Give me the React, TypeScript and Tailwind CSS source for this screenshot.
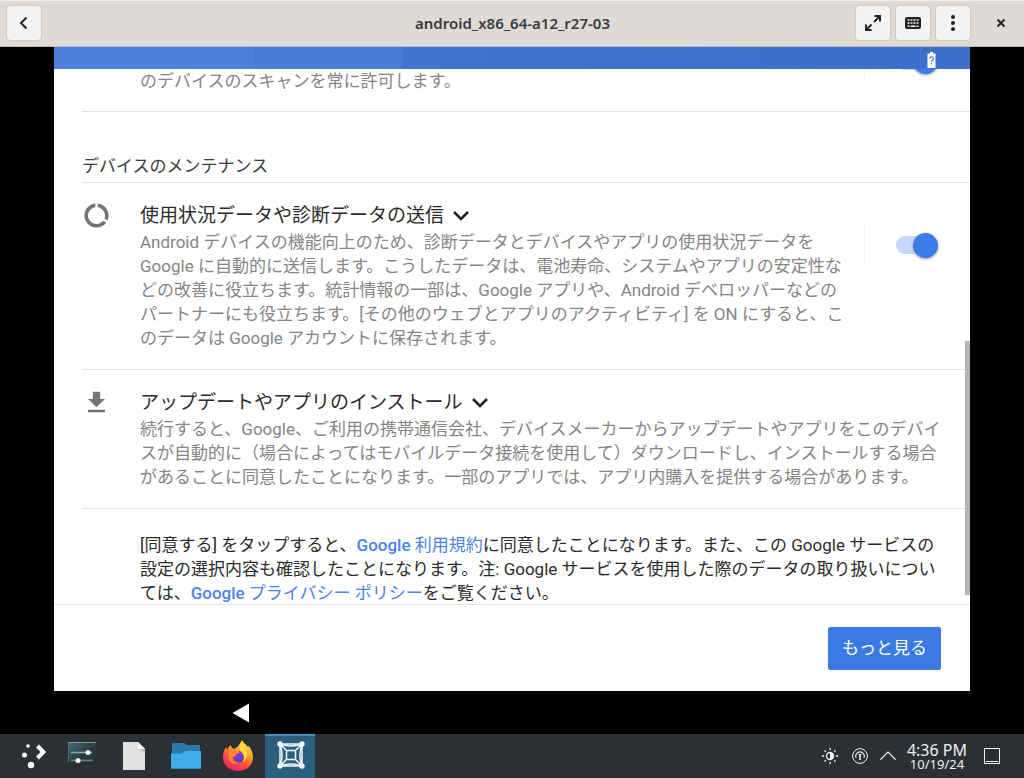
import { ReactNode, useState } from "react";
import clsx from "clsx";

interface toggleInterface {
  label: string;
}

function Toggle({ label }: toggleInterface) {
  const [on, setOn] = useState(true);

  return (
    <div className="flex flex-row items-center h-10 w-[106px] shrink-0 border-l border-gray-100 pl-[31px]">
      <label className="relative flex items-center w-[42px] h-[26px] cursor-pointer">
        <input
          type="checkbox"
          role="switch"
          aria-label={label}
          checked={on}
          onChange={() => setOn(!on)}
          className="peer appearance-none w-9 h-[18px] rounded-full bg-gray-300 checked:bg-[#c5d7fa]"
        />
        <span className="absolute left-0 size-[25px] rounded-full bg-gray-100 shadow-sm shadow-gray-400 peer-checked:left-[17px] peer-checked:bg-[#3b7de8]" />
      </label>
    </div>
  );
}

interface itemInterface {
  icon: string;
  title: string;
  text: string;
  toggle?: boolean;
}

function SettingItem({ icon, title, text, toggle }: itemInterface) {
  return (
    <div className="flex flex-row py-[19px] border-b border-[#e2e2e2]">
      <div className="flex items-center w-[58px] h-[26px] shrink-0">
        <svg viewBox="0 0 24 24" className="size-[29px] fill-[#757575]">
          <path d={icon} />
        </svg>
      </div>
      <div className={clsx("flex-1", toggle ? "pr-4" : "pr-7")}>
        <h3>
          <button className="flex flex-row items-center gap-2 text-[19px] leading-7 text-[#2b2b2b]">
            {title}
            <svg viewBox="0 0 18 12" className="w-[18px] h-3">
              <path
                d="M2 2l7 7 7-7"
                fill="none"
                stroke="#222"
                strokeWidth="2.6"
              />
            </svg>
          </button>
        </h3>
        <p className="text-[17px] leading-6 text-[#858585]">{text}</p>
      </div>
      {toggle && (
        <div className="pt-[23px]">
          <Toggle label={title} />
        </div>
      )}
    </div>
  );
}

interface headerButtonInterface {
  label: string;
  children: ReactNode;
}

function HeaderButton({ label, children }: headerButtonInterface) {
  return (
    <button
      aria-label={label}
      className="flex justify-center items-center size-[34px] rounded-sm bg-[#f5f3f1] shadow-[0_0_1px_1px_#d0cac4]"
    >
      {children}
    </button>
  );
}

function WindowHeader() {
  return (
    <header className="grid grid-cols-[1fr_auto_1fr] items-center h-[47px] shrink-0 pl-[7px] pr-1.5 pb-px bg-[#dfdad6] border-b border-b-[#bfb8b1] shadow-[inset_0_1px_#f0edea]">
      <HeaderButton label="Back">
        <svg viewBox="0 0 16 16" className="size-4">
          <path
            d="M10.5 2.5L5 8l5.500 5.500"
            fill="none"
            stroke="#222"
            strokeWidth="2"
          />
        </svg>
      </HeaderButton>
      <h1 className="text-[15px] leading-5 font-semibold text-[#383c3e] font-['Noto_Sans',sans-serif]">
        android_x86_64-a12_r27-03
      </h1>
      <div className="flex flex-row justify-end items-center gap-1.5">
        <HeaderButton label="Fullscreen">
          <svg viewBox="0 0 18 18" className="size-[18px]">
            <path
              d="M10.500 2H16v5.500M15.500 2.500L10 8M2 10.500V16h5.500M2.500 15.500L7.500 10.500"
              fill="none"
              stroke="#222"
              strokeWidth="2"
            />
          </svg>
        </HeaderButton>
        <HeaderButton label="Keyboard">
          <svg viewBox="0 0 18 14" className="w-[18px] h-3.5">
            <rect x="1" y="1" width="16" height="12" rx="2" fill="#222" />
            <path
              d="M3.500 4h11M3.500 7h11"
              stroke="#f5f3f1"
              strokeWidth="1.500"
              strokeDasharray="2 1"
            />
            <path
              d="M3.500 10.200h2M6.500 10.200h5M12.500 10.200h2"
              stroke="#f5f3f1"
              strokeWidth="1.500"
            />
          </svg>
        </HeaderButton>
        <HeaderButton label="Menu">
          <svg viewBox="0 0 16 18" className="w-4 h-[18px] fill-[#222]">
            <circle cx="8" cy="3" r="2" />
            <circle cx="8" cy="9" r="2" />
            <circle cx="8" cy="15" r="2" />
          </svg>
        </HeaderButton>
        <button
          aria-label="Close"
          className="flex justify-center items-center size-[34px] ml-2"
        >
          <svg viewBox="0 0 10 10" className="size-2.5">
            <path d="M1.500 1.500l7 7M8.500 1.500l-7 7" stroke="#222" strokeWidth="2" />
          </svg>
        </button>
      </div>
    </header>
  );
}

function DeviceScreen() {
  return (
    <main className="flex flex-col flex-1 min-h-0 mx-[54px] bg-white font-[Roboto,'Noto_Sans_CJK_JP',sans-serif]">
      <div className="relative z-10 flex flex-row justify-end items-center h-[22px] shrink-0 pr-[34px] pt-1 bg-[linear-gradient(90deg,#4a80de_200px,#477cd8_200px,#477cd8_348px,#3f74d0_348px,#3b6fca)]">
        <svg viewBox="0 0 9 16" className="w-[9px] h-4">
          <path d="M3 0h3v1.500h2.500V16H.5V1.500H3z" fill="#fff" />
          <path
            d="M2.800 6.500c0-2.400 3.600-2.200 3.600 0 0 1.500-1.800 1.400-1.800 3.200M4.600 11v1.600"
            fill="none"
            stroke="#3f74d0"
            strokeWidth="1.200"
          />
        </svg>
      </div>
      <div className="relative flex-1 min-h-0 overflow-hidden">
        <div className="-mt-7 pl-7">
          <div className="flex flex-row h-[71px] pb-[18px] border-b border-[#e2e2e2]">
            <p className="flex-1 self-end pl-[58px] text-[17px] leading-6 text-[#858585]">
              のデバイスのスキャンを常に許可します。
            </p>
            <Toggle label="スキャン" />
          </div>
          <h2 className="pt-[42px] pb-1 text-[17px] leading-6 text-[#3c3c3c] border-b border-[#e2e2e2]">
            デバイスのメンテナンス
          </h2>
          {ITEMS.map((item) => (
            <SettingItem key={item.title} {...item} />
          ))}
          <p className="pl-[58px] pr-7 pt-6 text-[17px] leading-6 text-[#2b2b2b]">
            [同意する] をタップすると、
            <a href="#terms" className="text-[#4a83e8]">
              <span className="font-medium">Google</span> 利用規約
            </a>
            に同意したことになります。また、この Google
            サービスの設定の選択内容も確認したことになります。注: Google
            サービスを使用した際のデータの取り扱いについては、
            <a href="#privacy" className="text-[#4a83e8]">
              <span className="font-medium">Google</span> プライバシー ポリシー
            </a>
            をご覧ください。
          </p>
        </div>
        <div className="absolute right-0 bottom-[9px] w-[5px] h-[254px] bg-[#b3b3b3]" />
      </div>
      <footer className="flex flex-row justify-end items-start h-[87px] shrink-0 pt-[22px] pr-[29px] border-t border-[#e2e2e2]">
        <button className="h-[43px] px-3.5 rounded-xs bg-[#3b7ae4] text-[17px] text-white">
          もっと見る
        </button>
      </footer>
    </main>
  );
}

interface taskInterface {
  label: string;
  active?: boolean;
  children: ReactNode;
}

function Task({ label, active, children }: taskInterface) {
  return (
    <button
      aria-label={label}
      className={clsx(
        "flex justify-center items-center w-[50px] h-full",
        active && "bg-[#2b5f7c] border-t-2 border-[#4090bd]"
      )}
    >
      {children}
    </button>
  );
}

function Taskbar() {
  return (
    <nav className="flex flex-row justify-between h-11 shrink-0 pl-[5px] pr-6 bg-[#2a3034] font-['Noto_Sans',sans-serif] text-[#eef0f1]">
      <div className="flex flex-row gap-0.5">
        <Task label="Start">
          <svg viewBox="0 0 32 32" className="size-8 fill-white">
            <circle cx="14" cy="6" r="1.800" />
            <circle cx="10.500" cy="15" r="2.500" />
            <circle cx="17" cy="25" r="3.200" />
            <path
              d="M23.500 6l6 6-6 6"
              fill="none"
              stroke="#fff"
              strokeWidth="4"
            />
          </svg>
        </Task>
        <Task label="Settings">
          <svg viewBox="0 0 32 32" className="size-8">
            <defs>
              <linearGradient id="panel" x1="0" y1="0" x2="1" y2="1">
                <stop offset="0" stopColor="#3f7080" />
                <stop offset="0.600" stopColor="#2b3940" />
                <stop offset="1" stopColor="#2a3034" />
              </linearGradient>
            </defs>
            <path d="M2 2h28v20H2z" fill="url(#panel)" />
            <path d="M2 2.500h28" stroke="#8f8f90" />
            <path d="M2.500 3v19" stroke="#5c6b73" />
            <path d="M5 12.500h21" stroke="#7fb2bd" strokeWidth="1.600" />
            <path d="M5 20.500h22" stroke="#5d7f8a" strokeWidth="1.600" />
            <circle cx="22" cy="12.500" r="2.500" fill="#fff" />
            <circle cx="12" cy="20.500" r="2.500" fill="#fff" />
          </svg>
        </Task>
        <Task label="Document">
          <svg viewBox="0 0 32 32" className="size-8">
            <path d="M5 2h15l7 7v21H5z" fill="#e0e2e2" />
            <path d="M20 2l7 7h-7z" fill="#fafafa" />
            <path d="M20 9h7v3z" fill="#b9bdbe" />
          </svg>
        </Task>
        <Task label="Files">
          <svg viewBox="0 0 32 32" className="size-8">
            <path d="M2 3h12l3 2h13v12H2z" fill="#2c79a8" />
            <path d="M1 13.500h11l3-2.500h16v18H1z" fill="#3daee9" />
            <path d="M1 28h30v1H1z" fill="#2b8cc0" />
          </svg>
        </Task>
        <Task label="Firefox">
          <svg viewBox="0 0 32 32" className="size-8">
            <defs>
              <linearGradient id="flame" x1="0.8" y1="0" x2="0.3" y2="1">
                <stop offset="0" stopColor="#fff44f" />
                <stop offset="0.350" stopColor="#ffa828" />
                <stop offset="0.650" stopColor="#ff5634" />
                <stop offset="1" stopColor="#e81e72" />
              </linearGradient>
              <linearGradient id="globe" x1="0" y1="0" x2="1" y2="1">
                <stop offset="0" stopColor="#b13bd0" />
                <stop offset="1" stopColor="#4a3bc4" />
              </linearGradient>
            </defs>
            <path
              d="M20 0c1 3 4 4 6 7l1-1c2 3 4 7 4 11 0 8-6 14-15 14S1 25 1 17c0-4 1-7 3-10l1 3c1-2 2-4 4-5 0 2 1 3 3 4 3-1 6-5 8-9z"
              fill="url(#flame)"
            />
            <circle cx="16" cy="17" r="6" fill="url(#globe)" />
            <path
              d="M7 11c3-2 6-2 8.500 0 1 0 2 1 2 2-2 0-4 1-4 2 0 2-3 1-3 3 1 4 5 5 7 3-3 4-10 3-11-3z"
              fill="#ff8a2c"
            />
            <path
              d="M20 1c-2 4-3 7-1 10 3 3 4 7 2 11 4-3 5-9 3-13-2-2-4-4-4-8z"
              fill="#ffdc3d"
            />
          </svg>
        </Task>
        <Task label="Boxes" active>
          <svg viewBox="-1 2 32 32" className="size-8">
            <path
              d="M5 5h22v22H5zM11.500 11.500h9v9h-9zM5 5l6.500 6.500M27 5l-6.500 6.500M5 27l6.500-6.500M27 27l-6.500-6.500M5 5c3 8 3 14 0 22M27 5c-3 8-3 14 0 22M5 5c8 3 14 3 22 0M5 27c8-3 14-3 22 0"
              fill="none"
              stroke="#f2f8fb"
              strokeWidth="1.500"
            />
            <g fill="#f2f8fb">
              <circle cx="5" cy="5" r="2.700" />
              <circle cx="27" cy="5" r="2.700" />
              <circle cx="5" cy="27" r="2.700" />
              <circle cx="27" cy="27" r="2.700" />
            </g>
          </svg>
        </Task>
      </div>
      <div className="flex flex-row items-center">
        <button aria-label="Brightness" className="mr-3.5">
          <svg viewBox="0 0 16 16" className="size-4">
            <circle
              cx="8"
              cy="8"
              r="3.500"
              fill="none"
              stroke="#eef0f1"
              strokeWidth="1.400"
            />
            <path d="M8 4.500a3.500 3.500 0 0 1 0 7z" fill="#eef0f1" />
            <path
              d="M8 0v2M8 14v2M0 8h2M14 8h2M2.500 2.500l1.300 1.300M12.200 12.200l1.300 1.300M2.500 13.500l1.300-1.300M12.200 3.800l1.300-1.300"
              stroke="#eef0f1"
              strokeWidth="1.300"
            />
          </svg>
        </button>
        <button aria-label="Updates" className="mr-3">
          <svg
            viewBox="0 0 16 16"
            className="size-4"
            fill="none"
            stroke="#eef0f1"
          >
            <circle cx="8" cy="8" r="7.400" />
            <path d="M4 9.800a4.300 4.300 0 1 1 8 0" strokeWidth="1.100" />
            <path d="M8 6.500V12" strokeWidth="1.600" />
            <path d="M6.500 6.500h3" />
          </svg>
        </button>
        <button aria-label="Show hidden icons" className="mr-[11px]">
          <svg viewBox="0 0 16 10" className="w-4 h-2.5">
            <path
              d="M.5 8.500L8 1l7.500 7.500"
              fill="none"
              stroke="#eef0f1"
              strokeWidth="1.200"
            />
          </svg>
        </button>
        <div className="flex flex-col items-center mr-[17px]">
          <p className="text-base leading-4">4:36 PM</p>
          <p className="text-[13px] leading-3">10/19/24</p>
        </div>
        <button aria-label="Show desktop">
          <svg viewBox="0 0 16 16" className="size-4">
            <path
              d="M.5.5h15v15H.5zM2 13.500h12"
              fill="none"
              stroke="#eef0f1"
            />
          </svg>
        </button>
      </div>
    </nav>
  );
}

export default function App() {
  return (
    <div className="flex flex-col h-screen overflow-hidden bg-black">
      <WindowHeader />
      <DeviceScreen />
      <div className="flex flex-row items-center h-[43px] shrink-0 pl-[232px]">
        <button aria-label="戻る">
          <svg viewBox="0 0 18 20" className="w-[18px] h-5 fill-white">
            <path d="M17 0.500v19L.5 10z" />
          </svg>
        </button>
      </div>
      <Taskbar />
    </div>
  );
}

const ITEMS = [
  {
    icon: "M13 2.050v3.030c3.390.490 6 3.390 6 6.920 0 .9-.18 1.750-.48 2.540l2.600 1.530c.56-1.240.88-2.620.88-4.070 0-5.180-3.950-9.450-9-9.950zM12 19c-3.870 0-7-3.130-7-7 0-3.530 2.610-6.430 6-6.920V2.050c-5.060.5-9 4.760-9 9.950 0 5.520 4.470 10 9.990 10 3.310 0 6.240-1.610 8.060-4.090l-2.600-1.530C16.170 17.980 14.210 19 12 19z",
    title: "使用状況データや診断データの送信",
    text: "Android デバイスの機能向上のため、診断データとデバイスやアプリの使用状況データを Google に自動的に送信します。こうしたデータは、電池寿命、システムやアプリの安定性などの改善に役立ちます。統計情報の一部は、Google アプリや、Android デベロッパーなどのパートナーにも役立ちます。[その他のウェブとアプリのアクティビティ] を ON にすると、このデータは Google アカウントに保存されます。",
    toggle: true,
  },
  {
    icon: "M19 9h-4V3H9v6H5l7 7 7-7zM5 18v2h14v-2H5z",
    title: "アップデートやアプリのインストール",
    text: "続行すると、Google、ご利用の携帯通信会社、デバイスメーカーからアップデートやアプリをこのデバイスが自動的に（場合によってはモバイルデータ接続を使用して）ダウンロードし、インストールする場合があることに同意したことになります。一部のアプリでは、アプリ内購入を提供する場合があります。",
  },
];
